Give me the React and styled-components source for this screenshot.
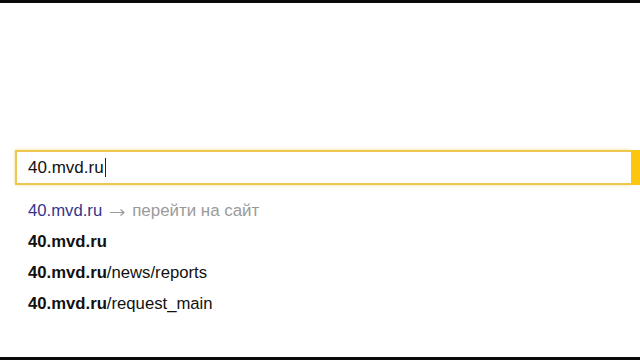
import React from "react";
import styled, { createGlobalStyle } from "styled-components";

const Global = createGlobalStyle`
  html, body { margin: 0; padding: 0; background: #fff; }
  body { font-family: "Liberation Sans", Arial, sans-serif; }
`;

const Page = styled.div`
  width: 640px;
  height: 360px;
  display: flex;
  flex-direction: column;
  background: #fff;
  overflow: hidden;
`;

const Bar = styled.div`
  height: 3px;
  flex: none;
  background: #0a0a0a;
`;

const Main = styled.div`
  flex: 1;
  display: flex;
  flex-direction: column;
  padding-top: 147px;
`;

const SearchRow = styled.div`
  display: flex;
  height: 35px;
  padding-left: 15px;
`;

const Field = styled.div`
  flex: 1;
  box-sizing: border-box;
  border: 2px solid #ecc94e;
  border-right: none;
  box-shadow: 0 0 3px rgba(245, 215, 110, 0.8);
  display: flex;
  align-items: center;
  padding-left: 11px;
  font-size: 17px;
  color: #111;
`;

const Caret = styled.span`
  display: inline-block;
  width: 1px;
  height: 19px;
  background: #222;
  margin-left: 1px;
`;

const GoButton = styled.div`
  width: 9px;
  flex: none;
  background: #fcc60c;
`;

const List = styled.ul`
  list-style: none;
  margin: 10px 0 0;
  padding: 0 0 0 28px;
`;

const Item = styled.li`
  height: 31px;
  line-height: 31px;
  font-size: 16.7px;
  color: #111;
  display: flex;
  align-items: center;
`;

const Link = styled.span`
  color: #35358a;
`;

const Hint = styled.span`
  color: #9a9a9a;
  font-size: 16.9px;
`;

const ArrowIcon = styled.svg`
  width: 15px;
  height: 8px;
  margin: 2px 7px 0 8px;
  flex: none;
`;

const Strong = styled.b`
  font-weight: 700;
`;

export default function App() {
  return (
    <Page>
      <Global />
      <Bar />
      <Main>
        <SearchRow>
          <Field>
            40.mvd.ru<Caret />
          </Field>
          <GoButton />
        </SearchRow>
        <List>
          <Item>
            <Link>40.mvd.ru</Link>
            <ArrowIcon viewBox="0 0 15 8">
              <path d="M0 4.5H13.5M10.5 1.5L14 4.5L10.5 7.5" fill="none" stroke="#9a9a9a" strokeWidth="1.2" />
            </ArrowIcon>
            <Hint>перейти на сайт</Hint>
          </Item>
          <Item>
            <Strong>40.mvd.ru</Strong>
          </Item>
          <Item>
            <span>
              <Strong>40.mvd.ru</Strong>/news/reports
            </span>
          </Item>
          <Item>
            <span>
              <Strong>40.mvd.ru</Strong>/request_main
            </span>
          </Item>
        </List>
      </Main>
      <Bar />
    </Page>
  );
}
